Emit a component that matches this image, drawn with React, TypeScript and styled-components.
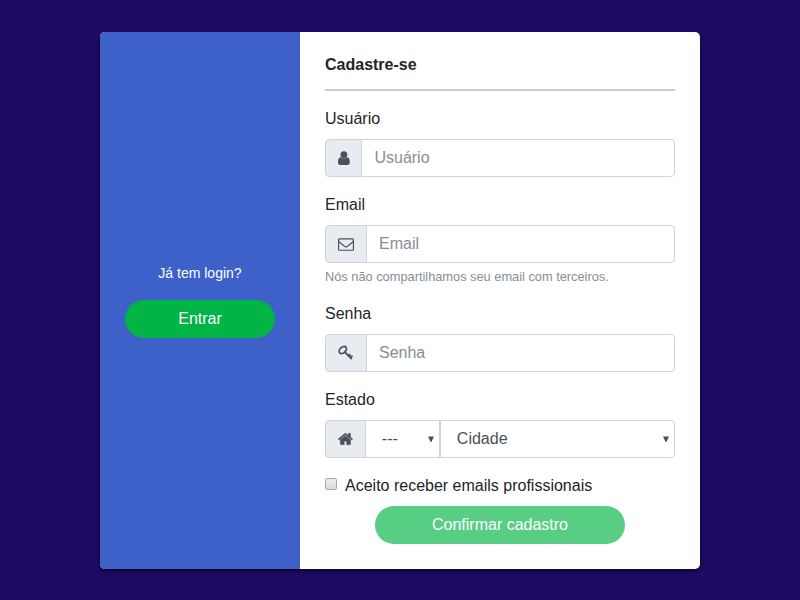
import React from 'react';
import styled, { createGlobalStyle } from 'styled-components';

const GlobalStyle = createGlobalStyle`
  *, *::before, *::after { box-sizing: border-box; }
  body {
    margin: 0;
    background: #1f0a64;
    color: #212529;
    font: 16px/24px "Liberation Sans", Arial, sans-serif;
  }
`;

const Page = styled.main`
  display: flex;
  justify-content: center;
  align-items: flex-start;
  height: 600px;
  padding-top: 32px;
`;

const Card = styled.section`
  display: flex;
  width: 600px;
  height: 537px;
  overflow: hidden;
  background: #fff;
  border-radius: 5px;
  box-shadow: 0 2px 4px rgba(0, 0, 0, 0.6);
`;

const LoginPanel = styled.aside`
  display: flex;
  flex-direction: column;
  align-items: center;
  justify-content: center;
  gap: 16px;
  width: 200px;
  background: #3d60c9;
  color: #fff;
`;

const LoginHint = styled.p`
  margin: 0;
  font-size: 14px;
  line-height: 21px;
`;

const PillButton = styled.button<{ $width: number }>`
  width: ${({ $width }) => $width}px;
  height: 38px;
  padding: 0 0 1px;
  border: 0;
  border-radius: 19px;
  background: #00b545;
  color: #fff;
  font: inherit;
  &:disabled { opacity: 0.65; }
`;

const Form = styled.form`
  display: flex;
  flex-direction: column;
  width: 400px;
  padding: 21px 25px 25px;
`;

const Title = styled.h1`
  margin: 0;
  padding-bottom: 12px;
  border-bottom: 2px solid #ccc;
  font-size: 16px;
  line-height: 24px;
`;

const Field = styled.div`
  display: flex;
  flex-direction: column;
  margin-top: 16px;
`;

const Label = styled.label`
  margin-bottom: 8px;
`;

const Group = styled.div`
  display: flex;
  height: 38px;
`;

const Addon = styled.span`
  display: flex;
  align-items: center;
  padding: 0 12px;
  border: 1px solid #ced4da;
  border-radius: 4px 0 0 4px;
  background: #e8ebf0;
  color: #495057;
`;

const Icon = styled.svg`
  display: block;
  height: 16px;
  overflow: visible;
  fill: currentColor;
`;

const Input = styled.input`
  flex: 1;
  min-width: 0;
  margin-left: -1px;
  padding: 6px 12px 7px;
  border: 1px solid #ced4da;
  border-radius: 0 4px 4px 0;
  background: #fff;
  font: inherit;
  &::placeholder { color: #868e96; opacity: 1; }
`;

const Help = styled.small`
  margin-top: 4px;
  color: #868e96;
  font-size: 12.8px;
  line-height: 19px;
`;

const SelectBox = styled.div<{ $width?: number; $last?: boolean }>`
  display: flex;
  align-items: center;
  justify-content: space-between;
  flex: ${({ $width }) => ($width ? `0 0 ${$width}px` : '1')};
  margin-left: ${({ $last }) => ($last ? 0 : -1)}px;
  padding: 0 5px 1px 16px;
  border: 1px solid #ced4da;
  border-radius: ${({ $last }) => ($last ? '0 4px 4px 0' : '0')};
  color: #495057;
`;

const Arrow = styled.svg`
  width: 6px;
  height: 6px;
  fill: #495057;
`;

const Consent = styled.label`
  display: flex;
  align-items: center;
  gap: 8px;
  margin-top: 16px;
`;

const Checkbox = styled.input`
  appearance: none;
  width: 12px;
  height: 12px;
  margin: 0 0 4px;
  border: 1px solid #a8a8a8;
  border-radius: 2px;
  background: linear-gradient(#eee, #dcdcdc);
`;

const Submit = styled(PillButton)`
  align-self: center;
  margin-top: 8px;
`;

function UserIcon() {
  return (
    <Icon viewBox="0 0 11.43 16" width={11.43} aria-hidden="true">
      <ellipse cx="5.9" cy="4.8" rx="3.4" ry="3.6" />
      <path d="M2.7 7.3C.9 7.3 0 9.3 0 12.2 0 14 .9 15 2.4 15h7c1.5 0 2.4-1 2.4-2.8 0-2.9-.9-4.9-2.7-4.9C7.3 9 4.500 9 2.700 7.300z" />
    </Icon>
  );
}

function EnvelopeIcon() {
  return (
    <Icon viewBox="0 0 1792 1792" width={16} aria-hidden="true">
      <path d="M1664 1504v-768q-32 36-69 66-268 206-426 338-51 43-83 67t-86.500 48.500-102.500 24.500h-2q-48 0-102.500-24.500t-86.500-48.500-83-67q-158-132-426-338-37-30-69-66v768q0 13 9.500 22.500t22.500 9.500h1472q13 0 22.500-9.500t9.500-22.500zm0-1051v-24.500l-.5-13-3-12.500-5.500-9-9-7.500-14-2.500h-1472q-13 0-22.500 9.500t-9.500 22.500q0 168 147 284 193 152 401 317 6 5 35 29.500t46 37.500 44.500 31.500 50.500 27.500 43 9h2q20 0 43-9t50.500-27.500 44.500-31.500 46-37.500 35-29.500q208-165 401-317 54-43 100.500-115.500t46.500-131.500zm128-37v1088q0 66-47 113t-113 47h-1472q-66 0-113-47t-47-113v-1088q0-66 47-113t113-47h1472q66 0 113 47t47 113z" />
    </Icon>
  );
}

function KeyIcon() {
  return (
    <Icon viewBox="0 0 16 16" width={16} aria-hidden="true">
      <g fill="none" stroke="currentColor" strokeWidth="1.8">
        <ellipse cx="4.8" cy="5" rx="4.2" ry="2.8" transform="rotate(-42 4.8 5)" />
        <path d="M6.800 7.200L13.800 14M10.200 10.800l1.700-1.800M12.500 12.700l2-2M11 9.700l1.200 1.200" />
      </g>
    </Icon>
  );
}

function HomeIcon() {
  return (
    <Icon viewBox="64 0 1664 1792" width={14.86} stroke="currentColor" strokeWidth="35" aria-hidden="true">
      <path d="M1472 992v480q0 26-19 45t-45 19h-384v-384h-256v384h-384q-26 0-45-19t-19-45v-480q0-1 .5-3t.5-3l575-474 575 474q1 2 1 6zm223-69l-62 74q-8 9-21 11h-3q-13 0-21-7l-692-577-692 577q-12 8-24 7-13-2-21-11l-62-74q-8-10-7-23.500t11-21.500l719-599q32-26 76-26t76 26l244 204v-195q0-14 9-23t23-9h192q14 0 23 9t9 23v408l219 182q10 8 11 21.500t-7 23.500z" />
    </Icon>
  );
}

function DownArrow() {
  return (
    <Arrow viewBox="0 0 6 6" aria-hidden="true">
      <path d="M0 .5h6L3.400 6h-.8z" />
    </Arrow>
  );
}

export default function App() {
  return (
    <>
      <GlobalStyle />
      <Page>
        <Card>
          <LoginPanel>
            <LoginHint>Já tem login?</LoginHint>
            <PillButton type="button" $width={150}>Entrar</PillButton>
          </LoginPanel>
          <Form>
            <Title>Cadastre-se</Title>
            <Field>
              <Label htmlFor="user">Usuário</Label>
              <Group>
                <Addon><UserIcon /></Addon>
                <Input id="user" placeholder="Usuário" />
              </Group>
            </Field>
            <Field>
              <Label htmlFor="email">Email</Label>
              <Group>
                <Addon><EnvelopeIcon /></Addon>
                <Input id="email" type="email" placeholder="Email" />
              </Group>
              <Help>Nós não compartilhamos seu email com terceiros.</Help>
            </Field>
            <Field>
              <Label htmlFor="password">Senha</Label>
              <Group>
                <Addon><KeyIcon /></Addon>
                <Input id="password" type="password" placeholder="Senha" />
              </Group>
            </Field>
            <Field>
              <Label as="span">Estado</Label>
              <Group>
                <Addon><HomeIcon /></Addon>
                <SelectBox $width={75} role="combobox" aria-label="Estado">
                  ---
                  <DownArrow />
                </SelectBox>
                <SelectBox $last role="combobox" aria-label="Cidade">
                  Cidade
                  <DownArrow />
                </SelectBox>
              </Group>
            </Field>
            <Consent>
              <Checkbox type="checkbox" />
              Aceito receber emails profissionais
            </Consent>
            <Submit type="submit" $width={250} disabled>Confirmar cadastro</Submit>
          </Form>
        </Card>
      </Page>
    </>
  );
}
